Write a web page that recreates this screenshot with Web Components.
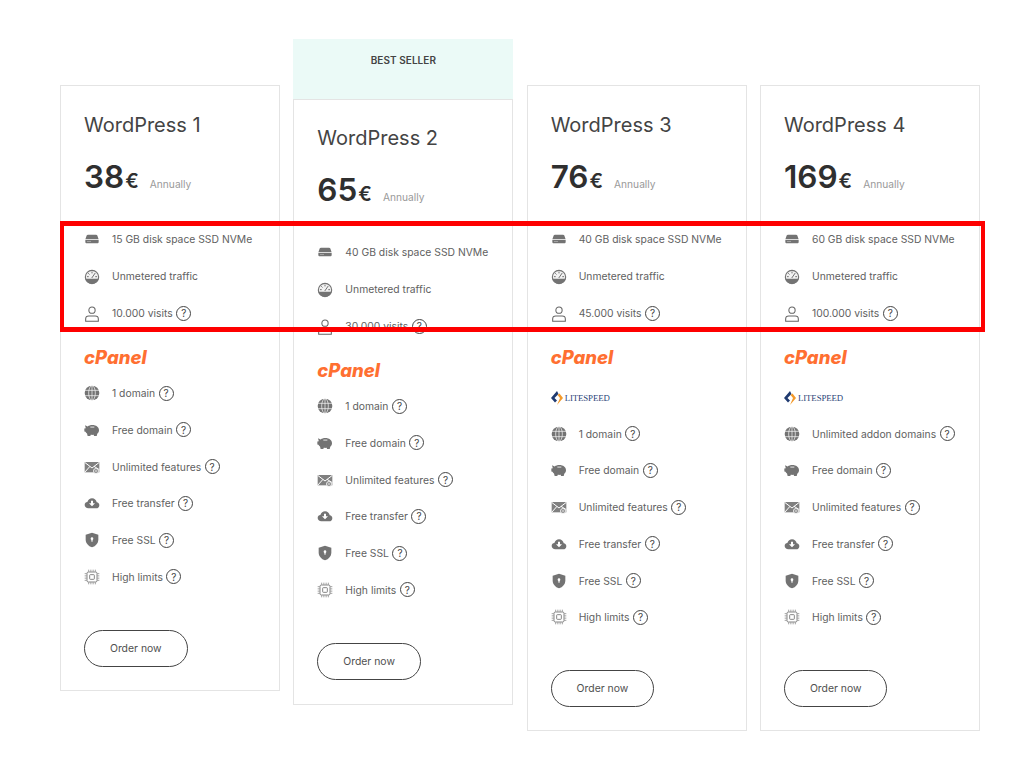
<!DOCTYPE html>
<html lang="en">
<head>
<meta charset="utf-8">
<title>WordPress plans</title>
<style>
  html, body { margin: 0; background: #fff; }
  body { font-family: Inter, "Liberation Sans", sans-serif; }
</style>
</head>
<body>
<plan-grid>
  <plan-card name="WordPress 1" price="38" period="Annually">
    <feature-row icon="disk">15 GB disk space SSD NVMe</feature-row>
    <feature-row icon="gauge">Unmetered traffic</feature-row>
    <feature-row icon="user" help>10.000 visits</feature-row>
    <brand-logo slot="brands" kind="cpanel"></brand-logo>
    <feature-row slot="extras" icon="globe" help>1 domain</feature-row>
    <feature-row slot="extras" icon="piggy" help>Free domain</feature-row>
    <feature-row slot="extras" icon="mail" help>Unlimited features</feature-row>
    <feature-row slot="extras" icon="cloud" help>Free transfer</feature-row>
    <feature-row slot="extras" icon="shield" help>Free SSL</feature-row>
    <feature-row slot="extras" icon="chip" help>High limits</feature-row>
  </plan-card>
  <plan-card name="WordPress 2" price="65" period="Annually" banner="BEST SELLER">
    <feature-row icon="disk">40 GB disk space SSD NVMe</feature-row>
    <feature-row icon="gauge">Unmetered traffic</feature-row>
    <feature-row icon="user" help>30.000 visits</feature-row>
    <brand-logo slot="brands" kind="cpanel"></brand-logo>
    <feature-row slot="extras" icon="globe" help>1 domain</feature-row>
    <feature-row slot="extras" icon="piggy" help>Free domain</feature-row>
    <feature-row slot="extras" icon="mail" help>Unlimited features</feature-row>
    <feature-row slot="extras" icon="cloud" help>Free transfer</feature-row>
    <feature-row slot="extras" icon="shield" help>Free SSL</feature-row>
    <feature-row slot="extras" icon="chip" help>High limits</feature-row>
  </plan-card>
  <plan-card name="WordPress 3" price="76" period="Annually">
    <feature-row icon="disk">40 GB disk space SSD NVMe</feature-row>
    <feature-row icon="gauge">Unmetered traffic</feature-row>
    <feature-row icon="user" help>45.000 visits</feature-row>
    <brand-logo slot="brands" kind="cpanel"></brand-logo>
    <brand-logo slot="brands" kind="litespeed"></brand-logo>
    <feature-row slot="extras" icon="globe" help>1 domain</feature-row>
    <feature-row slot="extras" icon="piggy" help>Free domain</feature-row>
    <feature-row slot="extras" icon="mail" help>Unlimited features</feature-row>
    <feature-row slot="extras" icon="cloud" help>Free transfer</feature-row>
    <feature-row slot="extras" icon="shield" help>Free SSL</feature-row>
    <feature-row slot="extras" icon="chip" help>High limits</feature-row>
  </plan-card>
  <plan-card name="WordPress 4" price="169" period="Annually">
    <feature-row icon="disk">60 GB disk space SSD NVMe</feature-row>
    <feature-row icon="gauge">Unmetered traffic</feature-row>
    <feature-row icon="user" help>100.000 visits</feature-row>
    <brand-logo slot="brands" kind="cpanel"></brand-logo>
    <brand-logo slot="brands" kind="litespeed"></brand-logo>
    <feature-row slot="extras" icon="globe" help>Unlimited addon domains</feature-row>
    <feature-row slot="extras" icon="piggy" help>Free domain</feature-row>
    <feature-row slot="extras" icon="mail" help>Unlimited features</feature-row>
    <feature-row slot="extras" icon="cloud" help>Free transfer</feature-row>
    <feature-row slot="extras" icon="shield" help>Free SSL</feature-row>
    <feature-row slot="extras" icon="chip" help>High limits</feature-row>
  </plan-card>
  <red-frame></red-frame>
</plan-grid>

<script>
const GREY = '#737373';
const ICONS = {
  disk: `<path fill="${GREY}" d="M6 5.500h12c1 0 1.700.5 2 1.400l1.800 5.100H2.200L4 6.900c.3-.9 1-1.400 2-1.400z"/>
         <path fill="${GREY}" d="M2 13h20v3.500c0 1.100-.9 2-2 2H4c-1.100 0-2-.9-2-2z"/>
         <rect x="4.500" y="15" width="6" height="1" fill="#bbb"/>`,
  gauge: `<g transform="translate(0 1.500)"><circle cx="12" cy="12" r="10" fill="#f2f2f2" stroke="${GREY}" stroke-width="1.700"/>
          <path fill="${GREY}" d="M2.300 14.500h19.400a10 10 0 0 1-19.400 0z"/>
          <path stroke="${GREY}" stroke-width="1.500" stroke-linecap="round" d="M12 13l4.500-6.500M5 11.500h1.500M12 4.500V6M6.800 6.800l1 1M17.500 11.500H19"/></g>`,
  user: `<g fill="none" stroke="#666" stroke-width="1.600" transform="translate(0 1.500)"><circle cx="12" cy="6.200" r="4.700"/>
         <path d="M2.500 22.800v-3.400c0-2.700 2.200-4.400 4.700-4.400h9.600c2.500 0 4.700 1.700 4.700 4.400v3.400z"/></g>`,
  globe: `<circle cx="12" cy="12" r="11" fill="${GREY}"/>
          <g fill="none" stroke="#fff" stroke-width="1"><ellipse cx="12" cy="12" rx="5" ry="11"/><path d="M1 8h22M1 16h22M12 1v22"/></g>`,
  piggy: `<path fill="${GREY}" d="M1.500 5l4 1.800C7.300 5.300 9.600 4.500 12.500 4.500c5.800 0 10 3.300 10 7.800 0 2.100-1 4-2.600 5.300l-.8 3.400h-4l-.6-1.900c-1.500.3-2.900.3-4.400 0l-.6 1.900H5.500l-1-3.800c-1-.7-1.800-1.500-2.300-2.500L.5 14.300V9.800l2.200-.6z"/>
          <rect x="9.500" y="7" width="6" height="1.200" fill="#fff"/>`,
  mail: `<rect x="1" y="4.500" width="22" height="15.500" fill="#808080"/>
         <path fill="none" stroke="#fff" stroke-width="1.500" d="M1 5l11 8.500L23 5M1 20l8-9M23 16l-8-5"/>
         <circle cx="18" cy="18" r="3.800" fill="#8f8f8f" stroke="#fff" stroke-width="1.200"/>
         <circle cx="18" cy="18" r="1.100" fill="#fff"/>`,
  cloud: `<path fill="${GREY}" d="M6.500 20C3.500 20 1 17.800 1 15c0-2.500 1.800-4.500 4.300-4.900C6.300 7 8.900 5 12 5c3.700 0 6.600 2.500 7.100 6 2.300.5 3.900 2 3.900 4.200 0 2.600-2 4.800-4.700 4.800z"/>
          <path fill="#fff" d="M10.500 8.500h3v4h3L12 17l-4.500-4.500h3z"/>`,
  shield: `<path fill="${GREY}" d="M12 1l9.500 3.200v7c0 5.600-3.900 9.900-9.500 11.800-5.600-1.900-9.500-6.200-9.500-11.800v-7z"/>
           <circle cx="12" cy="10" r="2" fill="#fff"/><rect x="11.100" y="10" width="1.800" height="4.500" fill="#fff"/>`,
  chip: `<g fill="none" stroke="${GREY}"><rect x="4.500" y="4.500" width="15" height="15" rx="2" stroke-width="1.300"/>
         <rect x="8.500" y="8.500" width="7" height="7" rx="1" stroke-width="1.300"/>
         <path stroke-width="1" d="M7 1v3M10.300 1v3M13.700 1v3M17 1v3M7 20v3M10.300 20v3M13.700 20v3M17 20v3M1 7h3M1 10.300h3M1 13.700h3M1 17h3M20 7h3M20 10.300h3M20 13.700h3M20 17h3"/></g>`
};

class PlanGrid extends HTMLElement {
  constructor() {
    super();
    this.attachShadow({mode: 'open'}).innerHTML = `
      <style>
        :host {
          display: grid;
          position: relative;
          grid-template-columns: repeat(4, 220px);
          column-gap: 13.330px;
          align-items: start;
          width: 920px;
          padding: 39px 0 0 60px;
        }
      </style>
      <slot></slot>`;
  }
}

class PlanCard extends HTMLElement {
  constructor() {
    super();
    const banner = this.getAttribute('banner');
    this.attachShadow({mode: 'open'}).innerHTML = `
      <style>
        :host { display: block; }
        .spacer { height: 46px; }
        .banner {
          height: 60px;
          box-sizing: border-box;
          padding-top: 15px;
          background: #ebfaf7;
          text-align: center;
          font-size: 10px;
          line-height: 13px;
          font-weight: 600;
          letter-spacing: .06px;
          color: #444;
        }
        .card {
          box-sizing: border-box;
          border: 1px solid #e4e4e4;
          padding: 26px 0 23px 23px;
        }
        .banner + .card { padding-top: 25px; padding-bottom: 24px; }
        h2 {
          margin: 0;
          font-size: 20px;
          line-height: 26px;
          font-weight: 400;
          color: #444;
        }
        .price {
          display: flex;
          align-items: baseline;
          margin-top: 19px;
          height: 40px;
          color: #2f2f2f;
          font-weight: 600;
        }
        .amount { font-size: 31.500px; line-height: 40px; }
        .cur { font-size: 20px; margin-left: 1px; }
        .period { font-size: 10.200px; font-weight: 400; color: #999; margin-left: 11px; }
        .list { display: flex; flex-direction: column; gap: 17px; margin-top: 32px; }
        .brands { display: flex; flex-direction: column; gap: 24.500px; margin-top: 26px; }
        .extras { display: flex; flex-direction: column; gap: 16.800px; margin-top: 18px; }
        order-button { margin-top: 43px; }
      </style>
      ${banner ? `<div class="banner">${banner}</div>` : '<div class="spacer"></div>'}
      <div class="card">
        <h2>${this.getAttribute('name')}</h2>
        <div class="price">
          <span class="amount">${this.getAttribute('price')}</span><span class="cur">€</span>
          <span class="period">${this.getAttribute('period')}</span>
        </div>
        <div class="list"><slot></slot></div>
        <div class="brands"><slot name="brands"></slot></div>
        <div class="extras"><slot name="extras"></slot></div>
        <order-button>Order now</order-button>
      </div>`;
  }
}

class FeatureRow extends HTMLElement {
  constructor() {
    super();
    const help = this.hasAttribute('help') ? '<help-mark></help-mark>' : '';
    this.attachShadow({mode: 'open'}).innerHTML = `
      <style>
        :host {
          display: flex;
          align-items: center;
          height: 20px;
          font-size: 10.350px;
          color: #616161;
        }
        svg { width: 16px; height: 16px; flex: none; margin-right: 12px; overflow: visible; }
        help-mark { margin-left: 3.500px; }
      </style>
      <svg viewBox="0 0 24 24">${ICONS[this.getAttribute('icon')]}</svg>
      <slot></slot>${help}`;
  }
}

class HelpMark extends HTMLElement {
  constructor() {
    super();
    this.attachShadow({mode: 'open'}).innerHTML = `
      <style>
        :host {
          display: flex;
          align-items: center;
          justify-content: center;
          box-sizing: border-box;
          width: 15px;
          height: 15px;
          border: 1px solid #444;
          border-radius: 50%;
          font-size: 10px;
          color: #444;
        }
      </style>?`;
  }
}

class BrandLogo extends HTMLElement {
  constructor() {
    super();
    const lite = this.getAttribute('kind') === 'litespeed';
    this.attachShadow({mode: 'open'}).innerHTML = `
      <style>
        :host { display: flex; align-items: center; height: 16px; }
        .cpanel {
          font: italic 800 18.500px/16px Inter, sans-serif;
          letter-spacing: 0;
          color: #ff6f31;
        }
        .lite {
          font: 400 8.800px/16px "Liberation Serif", serif;
          letter-spacing: -.1px;
          color: #2b4478;
          margin-left: 2px;
        }
        svg { width: 12px; height: 14px; }
      </style>
      ${lite ? `<svg viewBox="0 0 12 14">
          <path fill="#1f3a70" d="M6 0l1.500 3L3.500 7l2.500 2.500-2 2L0 7z"/>
          <path fill="#f39a2b" d="M6.500 4L9 7l-3 7 6-7-3.500-4.500z"/>
        </svg><span class="lite">LITESPEED</span>` : '<span class="cpanel">cPanel</span>'}`;
  }
}

class OrderButton extends HTMLElement {
  constructor() {
    super();
    this.attachShadow({mode: 'open'}).innerHTML = `
      <style>
        :host {
          display: flex;
          align-items: center;
          justify-content: center;
          box-sizing: border-box;
          width: 103.500px;
          height: 37px;
          border: 1px solid #444;
          border-radius: 19px;
          font-size: 10.400px;
          color: #505050;
        }
      </style>
      <slot></slot>`;
  }
}

// annotation drawn over the page, not part of the cards
class RedFrame extends HTMLElement {
  constructor() {
    super();
    this.attachShadow({mode: 'open'}).innerHTML = `
      <style>
        :host {
          position: absolute;
          left: 60px;
          top: 221px;
          width: 925px;
          height: 111px;
          box-sizing: border-box;
          border: 5px solid #fe0000;
          border-left-width: 4px;
          border-right-width: 4px;
        }
      </style>`;
  }
}

customElements.define('plan-grid', PlanGrid);
customElements.define('plan-card', PlanCard);
customElements.define('feature-row', FeatureRow);
customElements.define('help-mark', HelpMark);
customElements.define('brand-logo', BrandLogo);
customElements.define('order-button', OrderButton);
customElements.define('red-frame', RedFrame);
</script>
</body>
</html>
